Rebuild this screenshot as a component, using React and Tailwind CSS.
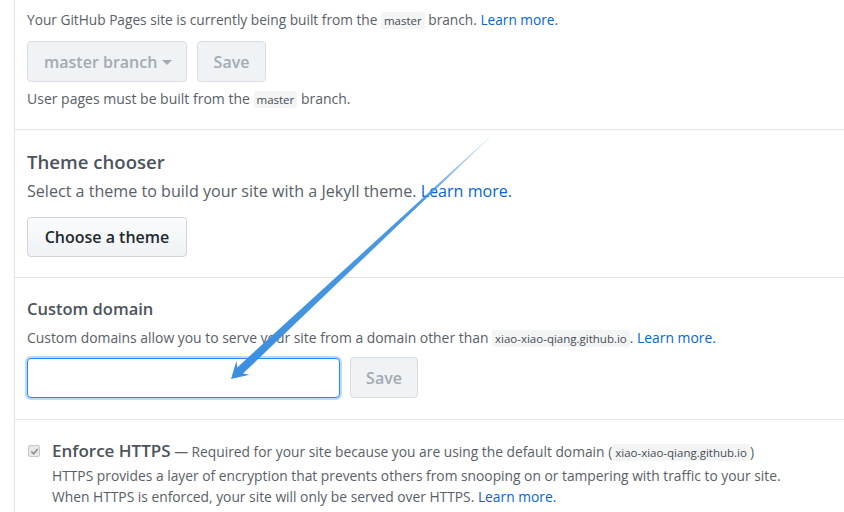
const font = { fontFamily: '"Open Sans", "Noto Sans CJK SC", sans-serif' }

function Code({ children }) {
  return <span className="rounded-[3px] bg-[#f3f4f4] px-[3px] py-[1px] text-[11.5px] text-[#444d56]">{children}</span>
}

function Arrow() {
  return (
    <svg className="pointer-events-none absolute left-0 top-0" width="844" height="512">
      <defs>
        <linearGradient id="shaft" x1="490" y1="137" x2="232" y2="378" gradientUnits="userSpaceOnUse">
          <stop offset="0" stopColor="#3b8fdf" stopOpacity="0.15" />
          <stop offset="0.25" stopColor="#3b8fdf" stopOpacity="0.9" />
          <stop offset="1" stopColor="#3b8fdf" />
        </linearGradient>
      </defs>
      <polygon
        points="231,379 249.6,374.8 243,373.6 490.2,137.2 489.8,136.8 237.2,367.4 236.5,360.7"
        fill="url(#shaft)"
      />
    </svg>
  )
}

export default function App() {
  return (
    <div className="relative h-[512px] w-[844px] overflow-hidden bg-white text-[14px] text-[#586069]" style={font}>
      <div className="ml-[14px] h-full border-l border-[#e1e4e8]">
        <section className="border-b border-[#e1e4e8] pb-[19px] pl-[12px] pt-[10px]">
          <p className="text-[13.7px] leading-[20px]">
            Your GitHub Pages site is currently being built from the <Code>master</Code> branch.{' '}
            <a className="text-[#0366d6]">Learn more.</a>
          </p>
          <div className="mt-[10px] flex gap-[10px]">
            <button className="flex h-[41px] w-[160px] items-center gap-[5px] rounded-[4px] border border-[#d9dde1] bg-[#eff3f6] pl-[16px] text-[16px] font-semibold text-[#a3aab1]">
              master branch
              <span className="mt-[2px] border-x-[5px] border-t-[5px] border-x-transparent border-t-[#a3aab1]" />
            </button>
            <button className="h-[41px] w-[69px] rounded-[4px] border border-[#d9dde1] bg-[#eff3f6] text-[16px] font-semibold text-[#a3aab1]">
              Save
            </button>
          </div>
          <p className="mt-[7px] leading-[20px]">
            User pages must be built from the <Code>master</Code> branch.
          </p>
        </section>

        <section className="border-b border-[#e1e4e8] pb-[20px] pl-[12px] pt-[20px]">
          <h3 className="text-[18.6px] font-semibold leading-[24px] text-[#4c535b]">Theme chooser</h3>
          <p className="mt-[5px] text-[16.1px] leading-[24px]">
            Select a theme to build your site with a Jekyll theme. <a className="text-[#0366d6]">Learn more.</a>
          </p>
          <button className="mt-[14px] h-[40px] w-[160px] rounded-[4px] border border-[#d1d5da] bg-gradient-to-b from-[#fafbfc] to-[#eff3f6] text-[16px] font-semibold text-[#24292e]">
            Choose a theme
          </button>
        </section>

        <section className="border-b border-[#e1e4e8] pb-[21px] pl-[12px] pt-[19px]">
          <h3 className="text-[16.5px] font-semibold leading-[24px] text-[#4c535b]">Custom domain</h3>
          <p className="mt-[7px] text-[13.9px] leading-[20px]">
            Custom domains allow you to serve your site from a domain other than <Code>xiao-xiao-qiang.github.io</Code>.{' '}
            <a className="text-[#0366d6]">Learn more.</a>
          </p>
          <div className="mt-[8px] flex items-center gap-[10px]">
            <input className="h-[40px] w-[313px] rounded-[4px] border border-[#2188ff] bg-white outline-none shadow-[0_0_0_2px_rgba(3,102,214,0.25)]" />
            <button className="h-[41px] w-[68px] rounded-[4px] border border-[#d9dde1] bg-[#eff3f6] text-[16px] font-semibold text-[#a3aab1]">
              Save
            </button>
          </div>
        </section>

        <section className="flex gap-[12px] pl-[13px] pt-[19px] text-[13.8px]">
          <span className="mt-[6px] flex h-[12px] w-[12px] shrink-0 items-center justify-center rounded-[2px] border border-[#c8c8c8] bg-[#e8e8e8]">
            <svg width="9" height="9" viewBox="0 0 10 10">
              <path d="M1.5 5.2 L4 7.5 L8.5 2.2" fill="none" stroke="#8d8d8d" strokeWidth="1.8" />
            </svg>
          </span>
          <div className="leading-[21px]">
            <p className="leading-[24px]">
              <span className="text-[17px] font-semibold text-[#4c535b]">Enforce HTTPS</span> — Required for your site because you are using the default domain (<Code>xiao-xiao-qiang.github.io</Code>)
            </p>
            <p>HTTPS provides a layer of encryption that prevents others from snooping on or tampering with traffic to your site.</p>
            <p>
              When HTTPS is enforced, your site will only be served over HTTPS. <a className="text-[#0366d6]">Learn more.</a>
            </p>
          </div>
        </section>
      </div>
      <Arrow />
    </div>
  )
}
